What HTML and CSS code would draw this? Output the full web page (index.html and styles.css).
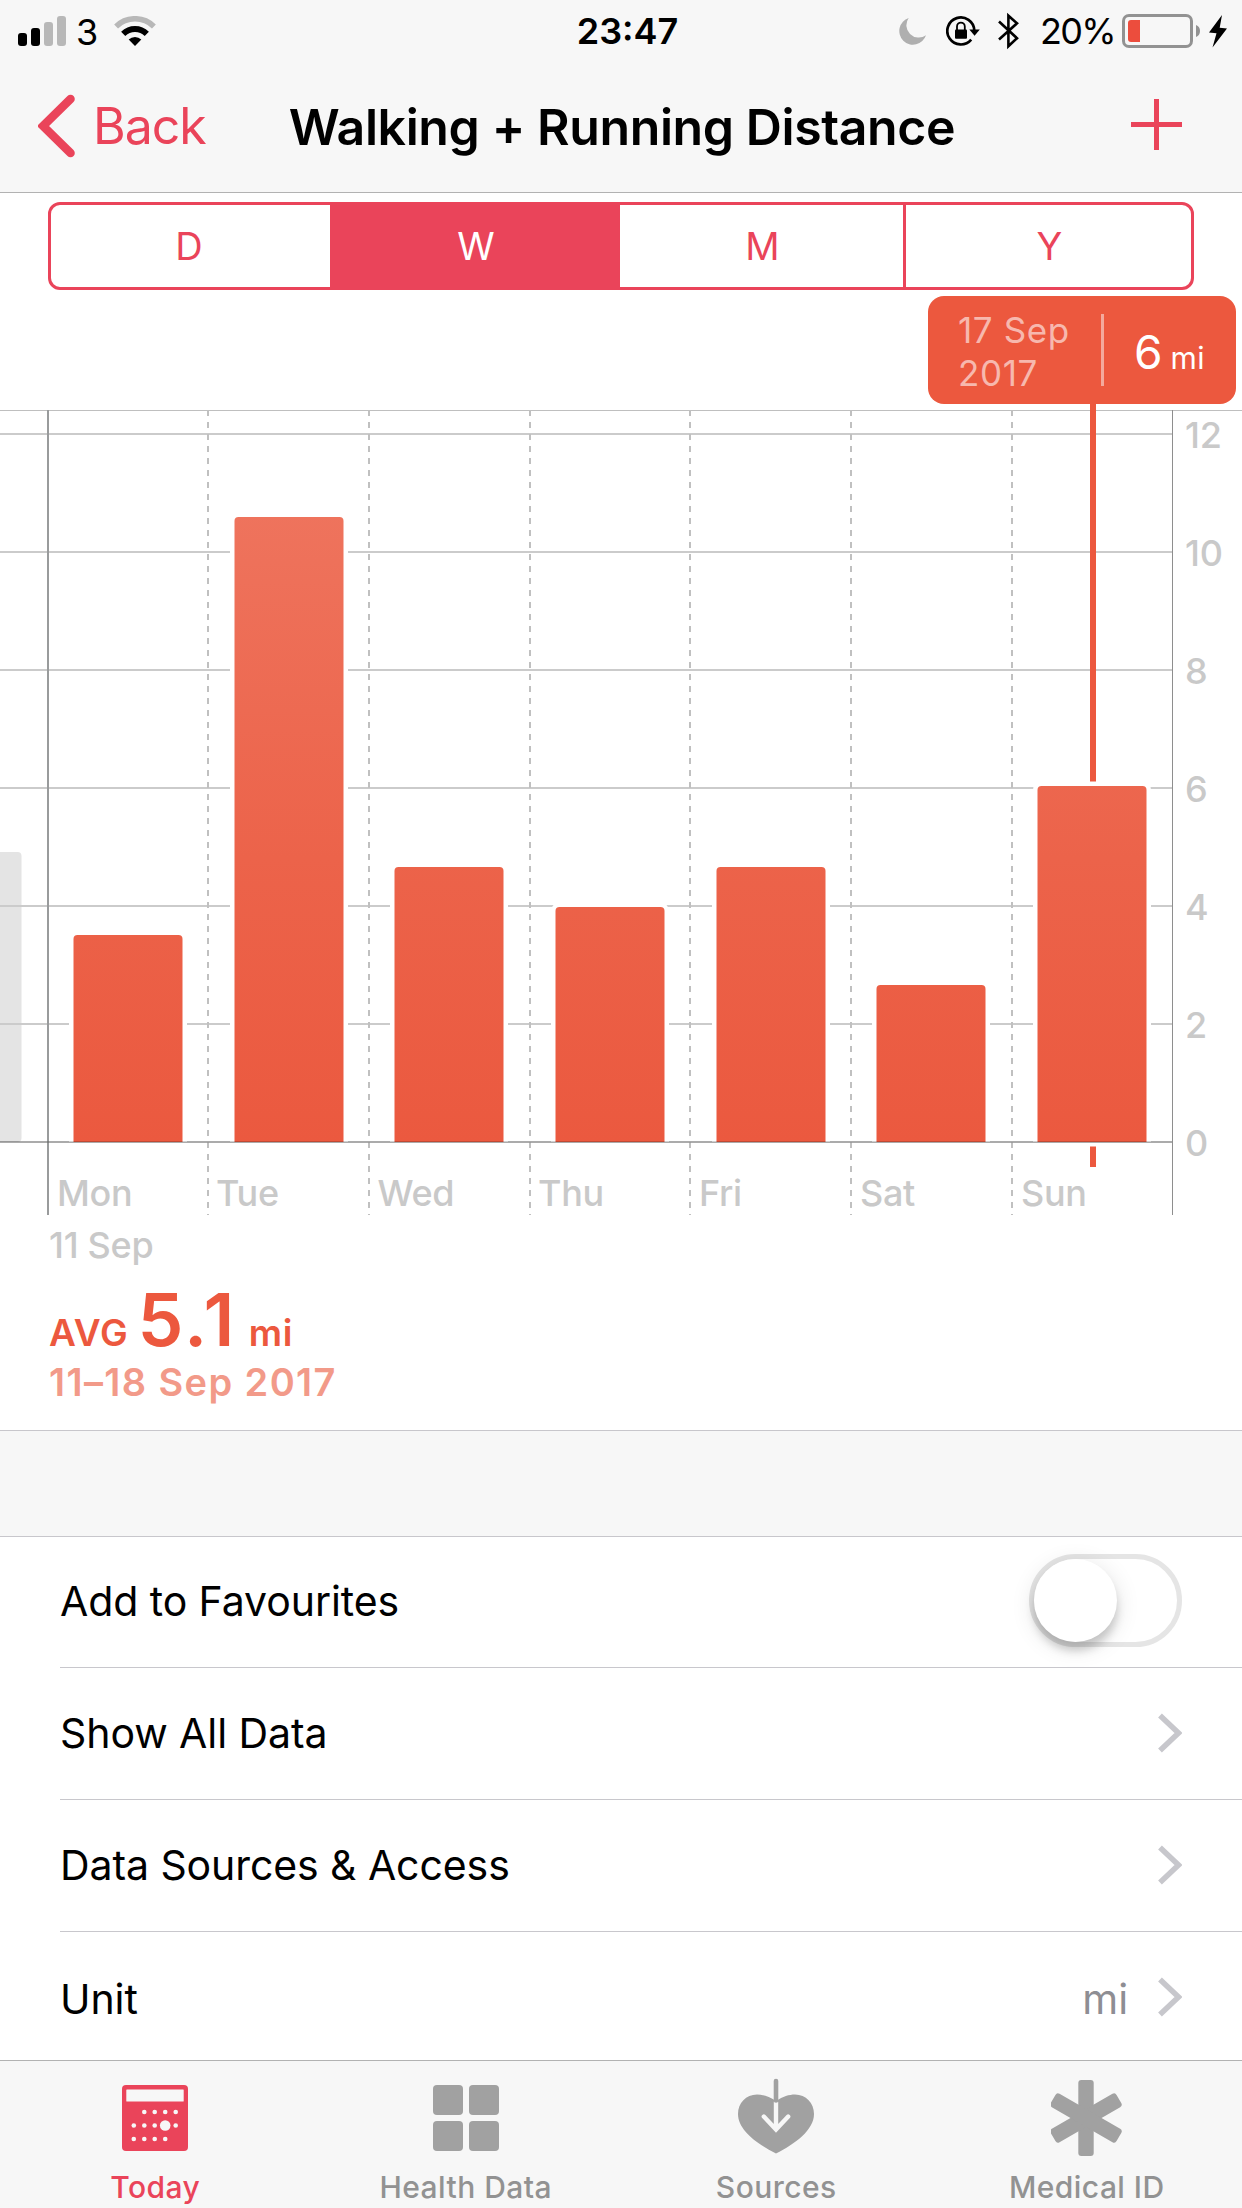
FILE: index.html
```html
<!DOCTYPE html>
<html lang="en">
<head>
    <meta charset="UTF-8">
    <meta name="viewport" content="width=device-width, initial-scale=1.0">
    <title>Walking + Running Distance</title>
    <link rel="stylesheet" href="styles.css">
</head>
<body>

<header class="header">
    <div class="status-bar">
        <div class="status-left">
            <svg class="signal" width="48" height="30" viewBox="0 0 48 30">
                <rect x="0" y="17" width="9" height="13" rx="3"/>
                <rect x="13" y="12" width="9" height="18" rx="3"/>
                <rect x="26" y="6" width="9" height="24" rx="3" fill="#b8b8b8"/>
                <rect x="39" y="0" width="9" height="30" rx="3" fill="#b8b8b8"/>
            </svg>
            <span class="carrier">3</span>
            <svg class="wifi" width="42" height="30" viewBox="0 0 42 30" fill="none">
                <path d="M2.1 10.4A27.2 27.2 0 0 1 39.9 10.4" stroke="#b8b8b8" stroke-width="5.6"/>
                <path d="M9.2 17.8A17 17 0 0 1 32.8 17.8" stroke="#000" stroke-width="6"/>
                <path d="M21 30L14.7 23.6A9 9 0 0 1 27.3 23.6Z" fill="#000"/>
            </svg>
        </div>
        <div class="clock">23:47</div>
        <div class="status-right">
            <svg class="moon" width="27" height="27" viewBox="0 0 27 27">
                <path d="M9.7 0A13.7 13.7 0 1 0 27 17.3A12.4 12.4 0 0 1 9.7 0Z" fill="#afafaf"/>
            </svg>
            <svg class="lock" width="34" height="30" viewBox="0 0 34 30" fill="none">
                <path d="M28.3 14.5A13.5 13.5 0 1 0 25.2 23.6" stroke="#000" stroke-width="2.7"/>
                <path d="M23.3 13.4H33.8L28.6 19.7Z" fill="#000"/>
                <rect x="9" y="13.5" width="12" height="9.2" rx="1" fill="#000"/>
                <path d="M11 14V10.5A3.9 3.9 0 0 1 18.8 10.5V14" stroke="#000" stroke-width="1.8"/>
            </svg>
            <svg class="bluetooth" width="22" height="38" viewBox="0 0 22 38" fill="none">
                <path d="M2 9.5L20 26.2L11.4 34.3V3.7L20 11.3L2 27.5" stroke="#000" stroke-width="2.6"/>
            </svg>
            <span class="percent">20%</span>
            <svg class="battery" width="78" height="34" viewBox="0 0 78 34">
                <rect x="1.5" y="1.5" width="68" height="31" rx="5.5" fill="none" stroke="#929292" stroke-width="3"/>
                <path d="M18 6H9Q6 6 6 9V25Q6 28 9 28H18Z" fill="#ec4d3d"/>
                <path d="M74 11Q78 12.5 78 17T74 23Z" fill="#929292"/>
            </svg>
            <svg class="bolt" width="18" height="33" viewBox="0 0 18 33">
                <path d="M13 0L0 17.6L7.5 18.2L3.5 32.5L18 13.4L10.7 12.7Z"/>
            </svg>
        </div>
    </div>
    <div class="nav-bar">
        <a class="back">
            <svg width="38" height="64" viewBox="0 0 38 64" fill="none">
                <path d="M32.5 5L5 32L32.5 59" stroke="#ea445a" stroke-width="8.6" stroke-linecap="round"/>
            </svg>
            <span>Back</span>
        </a>
        <h1 class="title">Walking + Running Distance</h1>
        <a class="add">
            <svg width="51" height="51" viewBox="0 0 51 51">
                <path d="M0 25.5H51M25.5 0V51" stroke="#ea445a" stroke-width="5"/>
            </svg>
        </a>
    </div>
</header>

<nav class="segments">
    <a class="segment">D</a>
    <a class="segment active">W</a>
    <a class="segment">M</a>
    <a class="segment">Y</a>
</nav>

<section class="chart">
    <svg class="chart-svg" width="1242" height="870" viewBox="0 410 1242 870">
        <defs>
            <linearGradient id="bar-fill" gradientUnits="userSpaceOnUse" x1="0" y1="433" x2="0" y2="1142">
                <stop offset="0" stop-color="#ef7761"/>
                <stop offset="0.6" stop-color="#ec634a"/>
                <stop offset="1" stop-color="#eb593f"/>
            </linearGradient>
            <clipPath id="plot">
                <rect x="0" y="410" width="1242" height="732"/>
            </clipPath>
        </defs>

        <!-- previous week -->
        <rect x="-80" y="852" width="101.5" height="290" rx="4" fill="#e4e4e4"/>

        <path class="grid" d="M0 434H1172M0 552H1172M0 670H1172M0 788H1172M0 906H1172M0 1024H1172"/>
        <path class="baseline" d="M0 1142H1172"/>
        <path class="top-line" d="M0 410.5H1242"/>
        <path class="days" d="M208 410V1215M369 410V1215M530 410V1215M690 410V1215M851 410V1215M1012 410V1215"/>
        <path class="axis" d="M48 410V1215"/>
        <path class="axis-right" d="M1172.5 410V1215"/>

        <g class="bars" clip-path="url(#plot)">
            <rect x="73.5" y="935" width="109" height="240" rx="4"/>
            <rect x="234.5" y="517" width="109" height="660" rx="4"/>
            <rect x="394.5" y="867" width="109" height="310" rx="4"/>
            <rect x="555.5" y="907" width="109" height="270" rx="4"/>
            <rect x="716.5" y="867" width="109" height="310" rx="4"/>
            <rect x="876.5" y="985" width="109" height="190" rx="4"/>
            <rect x="1037.5" y="786" width="109" height="390" rx="4"/>
        </g>
        <path class="baseline" d="M0 1142H1172"/>

        <!-- selected day -->
        <path class="marker" d="M1093 404V781.5M1093 1146.5V1167"/>

        <g class="labels">
            <text x="1185" y="448">12</text>
            <text x="1185" y="566">10</text>
            <text x="1185" y="684">8</text>
            <text x="1185" y="802">6</text>
            <text x="1185" y="920">4</text>
            <text x="1185" y="1038">2</text>
            <text x="1185" y="1156">0</text>
            <text x="57" y="1206">Mon</text>
            <text x="216" y="1206">Tue</text>
            <text x="377.5" y="1206">Wed</text>
            <text x="538" y="1206">Thu</text>
            <text x="699" y="1206">Fri</text>
            <text x="860" y="1206">Sat</text>
            <text x="1021" y="1206">Sun</text>
            <text x="49" y="1258">11 Sep</text>
        </g>
    </svg>

    <div class="callout">
        <div class="callout-date">17 Sep<br>2017</div>
        <div class="callout-value"><span>6</span> <small>mi</small></div>
    </div>
</section>

<section class="summary">
    <div class="average">
        <span class="average-unit">AVG</span>
        <span class="average-value">5.1</span>
        <span class="average-unit">mi</span>
    </div>
    <div class="range">11–18 Sep 2017</div>
</section>

<div class="spacer"></div>

<ul class="list">
    <li class="row">
        <span>Add to Favourites</span>
        <span class="toggle"><span class="knob"></span></span>
    </li>
    <li class="row">
        <span>Show All Data</span>
        <svg class="chevron" width="24" height="40" viewBox="0 0 24 40"><path d="M2 2.5L20.5 20L2 37.5"/></svg>
    </li>
    <li class="row">
        <span>Data Sources &amp; Access</span>
        <svg class="chevron" width="24" height="40" viewBox="0 0 24 40"><path d="M2 2.5L20.5 20L2 37.5"/></svg>
    </li>
    <li class="row">
        <span>Unit</span>
        <span class="detail">mi</span>
        <svg class="chevron" width="24" height="40" viewBox="0 0 24 40"><path d="M2 2.5L20.5 20L2 37.5"/></svg>
    </li>
</ul>

<footer class="tab-bar">
    <a class="tab active">
        <svg width="66" height="82" viewBox="0 -8 66 82">
            <rect width="66" height="66" rx="4" fill="#ea445a"/>
            <g fill="#f7f7f7">
                <rect x="4.3" y="4.4" width="57.4" height="12.2" rx="0.5"/>
                <circle cx="22.3" cy="27" r="2.3"/>
                <circle cx="32.7" cy="27" r="2.3"/>
                <circle cx="43.2" cy="27" r="2.3"/>
                <circle cx="53.7" cy="27" r="2.3"/>
                <circle cx="11.8" cy="40.5" r="2.3"/>
                <circle cx="22.3" cy="40.5" r="2.3"/>
                <circle cx="32.7" cy="40.5" r="2.3"/>
                <circle cx="43.2" cy="40.5" r="5.3"/>
                <circle cx="53.7" cy="40.5" r="2.3"/>
                <circle cx="11.8" cy="54" r="2.3"/>
                <circle cx="22.3" cy="54" r="2.3"/>
                <circle cx="32.7" cy="54" r="2.3"/>
                <circle cx="43.2" cy="54" r="2.3"/>
            </g>
        </svg>
        <span>Today</span>
    </a>
    <a class="tab">
        <svg width="66" height="82" viewBox="0 -8 66 82" fill="#a1a1a1">
            <rect width="30" height="30" rx="4"/>
            <rect x="36" width="30" height="30" rx="4"/>
            <rect y="36" width="30" height="30" rx="4"/>
            <rect x="36" y="36" width="30" height="30" rx="4"/>
        </svg>
        <span>Health Data</span>
    </a>
    <a class="tab">
        <svg width="76" height="82" viewBox="0 -1 76 82" fill="none" stroke-linecap="round">
            <path d="M38 23C45 18.5 51 16.5 57 16.5C68 16.5 76 25 76 36C76 52 57 66 38 75.5C19 66 0 52 0 36C0 25 8 16.5 19 16.5C25 16.5 31 18.5 38 23Z" fill="#a1a1a1"/>
            <path d="M38 24V50M25.8 38.5L38 51.5L50.2 38.5" stroke="#f7f7f7" stroke-width="4.4"/>
            <path d="M38 3V22.5" stroke="#a1a1a1" stroke-width="4.6"/>
        </svg>
        <span>Sources</span>
    </a>
    <a class="tab">
        <svg width="72" height="82" viewBox="-35 -41 72 82" fill="#a1a1a1">
            <rect x="-7.7" y="-38" width="15.4" height="76" rx="3"/>
            <rect x="-7.7" y="-38" width="15.4" height="76" rx="3" transform="rotate(60)"/>
            <rect x="-7.7" y="-38" width="15.4" height="76" rx="3" transform="rotate(-60)"/>
        </svg>
        <span>Medical ID</span>
    </a>
</footer>

</body>
</html>
```
FILE: styles.css
```css
* {
    box-sizing: border-box;
}

body {
    margin: 0;
    width: 1242px;
    height: 2208px;
    display: flex;
    flex-direction: column;
    overflow: hidden;
    background-color: #fff;
    color: #000;
    font-family: Inter, "Liberation Sans", sans-serif;
}

svg {
    display: block;
    flex: none;
}

/* header */

.header {
    flex: none;
    height: 193px;
    background-color: #f7f7f7;
    border-bottom: 1px solid #b2b2b2;
}

.status-bar {
    display: grid;
    grid-template-columns: 1fr auto 1fr;
    align-items: center;
    height: 60px;
    padding: 0 15px 0 18px;
    font-size: 36px;
    line-height: 60px;
}

.status-left,
.status-right {
    display: flex;
    align-items: center;
}

.status-right {
    justify-content: flex-end;
}

.carrier {
    margin: 2px 16px 0 10px;
}

.clock {
    padding: 0 0 0 10px;
    font-weight: 600;
}

.moon {
    margin-right: 20px;
}

.lock {
    margin-right: 17px;
}

.bluetooth {
    margin-right: 21px;
}

.percent {
    margin-right: 7px;
    letter-spacing: -1.7px;
}

.battery {
    margin-right: 9px;
}

.nav-bar {
    display: grid;
    grid-template-columns: 1fr auto 1fr;
    align-items: center;
    height: 132px;
    padding: 0 60px 0 38px;
}

.back {
    display: flex;
    align-items: center;
    gap: 17px;
    color: #ea445a;
    font-size: 50px;
    letter-spacing: -1px;
}

.title {
    margin: 0;
    padding: 1px 0 0 24px;
    font-size: 50px;
    font-weight: 600;
    letter-spacing: -0.4px;
    line-height: 60px;
}

.add {
    justify-self: end;
    margin-bottom: 3px;
}

/* D / W / M / Y */

.segments {
    flex: none;
    display: grid;
    grid-template-columns: 279px 290px 283px 1fr;
    height: 88px;
    margin: 9px 48px 0;
    border: 3px solid #ea445a;
    border-radius: 12px;
    overflow: hidden;
}

.segment {
    display: flex;
    align-items: center;
    justify-content: center;
    padding-left: 2px;
    color: #ea445a;
    font-size: 38px;
}

.segment:first-child {
    padding: 0 3px 0 0;
}

.segment.active {
    background-color: #ea445a;
    color: #fff;
}

.segment:last-child {
    border-left: 3px solid #ea445a;
}

/* chart */

.chart {
    position: relative;
    flex: none;
    margin-top: 120px;
}

.chart-svg {
    overflow: visible;
}

.grid {
    stroke: #cbcbcb;
    stroke-width: 2;
}

.baseline {
    stroke: rgba(0, 0, 0, 0.18);
    stroke-width: 2;
}

.top-line {
    stroke: #bfbfbf;
}

.days {
    stroke: #c0c0c0;
    stroke-width: 2;
    stroke-dasharray: 6 6;
}

.axis {
    stroke: #999b9c;
    stroke-width: 2;
}

.axis-right {
    stroke: #8e8e8e;
}

.bars rect {
    fill: url(#bar-fill);
    stroke: #fff;
    stroke-width: 9;
    paint-order: stroke;
}

.marker {
    stroke: #ec583e;
    stroke-width: 6;
}

.labels {
    fill: #c9c9c9;
    font-size: 36px;
    font-weight: 500;
    letter-spacing: -0.3px;
}

.callout {
    position: absolute;
    top: -114px;
    right: 6px;
    display: flex;
    align-items: center;
    width: 308px;
    height: 108px;
    padding-left: 30px;
    border-radius: 16px;
    background-color: #ec583e;
    color: #fff;
}

.callout-date {
    width: 146px;
    height: 72px;
    padding-top: 4px;
    display: flex;
    align-items: center;
    border-right: 3px solid #f4a99c;
    color: #f7b8ae;
    font-size: 35px;
    letter-spacing: 0.6px;
    line-height: 43px;
}

.callout-value {
    display: flex;
    align-items: baseline;
    gap: 8px;
    padding: 4px 0 0 30px;
    font-size: 46px;
}

.callout-value small {
    font-size: 30px;
    letter-spacing: 0.5px;
}

/* weekly average */

.summary {
    flex: none;
    height: 151px;
    padding: 5px 49px 0;
    border-bottom: 1px solid #c8c7cc;
    font-weight: 600;
}

.average {
    display: flex;
    align-items: baseline;
    height: 70px;
    line-height: 70px;
    color: #ec583e;
    font-size: 37px;
    letter-spacing: 0.7px;
}

.average-value {
    margin: 0 12px 0 9px;
    font-size: 73px;
    letter-spacing: 2.5px;
}

.range {
    margin-top: 4px;
    color: #f29a89;
    font-size: 38px;
    letter-spacing: 1.4px;
    line-height: 46px;
}

/* settings */

.spacer {
    flex: none;
    height: 106px;
    background-color: #f7f7f7;
    border-bottom: 1px solid #c8c7cc;
}

.list {
    flex: 1;
    min-height: 0;
    margin: 0;
    padding: 0 0 0 60px;
    overflow: hidden;
    list-style: none;
    font-size: 41px;
    letter-spacing: -0.08px;
}

.row {
    display: flex;
    align-items: center;
    justify-content: space-between;
    height: 132px;
    padding: 0 60px 2px 0;
    border-bottom: 1px solid #c8c7cc;
}

.row:first-child {
    height: 131px;
}

.row:last-child span {
    padding-top: 4px;
}

.chevron {
    fill: none;
    stroke: #c7c7cc;
    stroke-width: 5.5;
}

.detail {
    margin: 0 30px 0 auto;
    color: #8e8e93;
}

.toggle {
    width: 153px;
    height: 93px;
    margin-bottom: 1px;
    border: 5px solid #e5e5e5;
    border-radius: 47px;
}

.knob {
    display: block;
    width: 83px;
    height: 83px;
    border-radius: 50%;
    background-color: #fff;
    box-shadow: 0 9px 9px rgba(0, 0, 0, 0.17), 0 5px 24px rgba(0, 0, 0, 0.12);
}

/* tabs */

.tab-bar {
    flex: none;
    display: flex;
    height: 148px;
    background-color: #f7f7f7;
    border-top: 1px solid #b2b2b2;
}

.tab {
    flex: 1;
    display: flex;
    flex-direction: column;
    align-items: center;
    padding-top: 16px;
    color: #929292;
    font-size: 30px;
    font-weight: 500;
    letter-spacing: 0.45px;
    line-height: 36px;
}

.tab.active {
    color: #ea445a;
}

.tab span {
    margin-top: 10px;
}
```
